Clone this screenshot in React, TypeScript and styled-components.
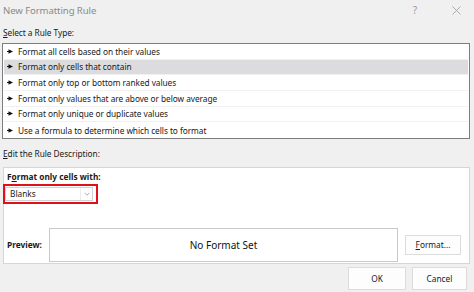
import React from "react";
import styled, { createGlobalStyle } from "styled-components";

const Global = createGlobalStyle`
  html, body { margin: 0; padding: 0; background: #f0f0f0; }
  * { box-sizing: border-box; }
`;

const Window = styled.div`
  width: 474px;
  height: 292px;
  background: #f0f0f0;
  font-family: "Noto Sans", "Open Sans", sans-serif;
  font-size: 8px;
  color: #1a1a1a;
  display: flex;
  flex-direction: column;
  overflow: hidden;
`;

const TitleBar = styled.div`
  height: 20px;
  display: flex;
  align-items: center;
  padding: 0 0 0 3px;
`;

const Title = styled.div`
  flex: 1;
  font-size: 9.6px;
  color: #8a8a8a;
  letter-spacing: -0.1px;
`;

const TitleIcon = styled.div<{ $w: number }>`
  width: ${(p) => p.$w}px;
  display: flex;
  justify-content: center;
  color: #9a9a9a;
  font-size: 10px;
`;

const SectionLabel = styled.div<{ $h: number }>`
  height: ${(p) => p.$h}px;
  display: flex;
  align-items: center;
  padding-left: 3px;
  padding-top: 2px;
  font-size: 8.3px;
  letter-spacing: -0.05px;
`;

const U = styled.span`
  text-decoration: underline;
  text-underline-offset: 1px;
`;

const ListBox = styled.div`
  margin: 0 4px 0 2px;
  border: 1px solid #7d7d7d;
  background: #fff;
  display: flex;
  flex-direction: column;
  padding: 0 1px 0 1px;
`;

const Row = styled.div<{ $sel?: boolean; $last?: boolean }>`
  height: 15.67px;
  display: flex;
  align-items: center;
  gap: 5px;
  padding-left: 3px;
  background: ${(p) => (p.$sel ? "#dcdcdf" : "#fff")};
  border-bottom: ${(p) => (p.$last ? "none" : "1px solid #f1f1f1")};
  font-size: 8.3px;
  letter-spacing: -0.05px;
`;

const Panel = styled.div`
  margin: 0 4px 0 3px;
  height: 97px;
  border: 1px solid #d6d6d6;
  background: #fff;
  display: flex;
  flex-direction: column;
  padding: 3px 0 0 0;
`;

const Bold = styled.div`
  font-weight: 700;
  font-size: 8.3px;
  height: 12px;
  display: flex;
  align-items: center;
  padding-left: 3px;
`;

const RedFrame = styled.div`
  width: 95px;
  height: 20px;
  border: 2.5px solid #e0101a;
  margin: 1px 0 0 -1px;
  display: flex;
  align-items: stretch;
  background: #fff;
`;

const Select = styled.div`
  flex: 1;
  display: flex;
  align-items: center;
  border: 1px solid #d2d2d2;
  margin: 1px 3px 1px 0;
`;

const SelectValue = styled.div`
  flex: 1;
  padding-left: 4px;
  font-size: 8.3px;
`;

const SelectArrow = styled.div`
  width: 12px;
  align-self: stretch;
  display: flex;
  align-items: center;
  justify-content: center;
  border-left: 1px solid #ececec;
`;

const PreviewRow = styled.div`
  margin-top: auto;
  display: flex;
  align-items: center;
  padding-bottom: 1px;
`;

const PreviewLabel = styled.div`
  width: 45px;
  font-weight: 700;
  font-size: 8.3px;
  padding-left: 3px;
`;

const PreviewBox = styled.div`
  width: 349px;
  height: 34px;
  border: 1px solid #c9c9c9;
  display: flex;
  align-items: center;
  justify-content: center;
  font-size: 10px;
  color: #111;
`;

const Button = styled.div<{ $w: number; $h: number }>`
  width: ${(p) => p.$w}px;
  height: ${(p) => p.$h}px;
  border: 1px solid #dcdcdc;
  background: #fdfdfd;
  display: flex;
  align-items: center;
  justify-content: center;
  font-size: 8.3px;
`;

const FormatBtnWrap = styled.div`
  margin-left: 7px;
`;

const Footer = styled.div`
  flex: 1;
  display: flex;
  justify-content: flex-end;
  align-items: center;
  gap: 6px;
  padding: 1px 7px 0 0;
`;

const Pointer = () => (
  <svg width="6" height="5" viewBox="0 0 6 5">
    <path d="M0 2.5H3" stroke="#111" strokeWidth="1" />
    <path d="M1.5 0.2L6 2.5L1.5 4.8Z" fill="#111" />
  </svg>
);

const Chevron = () => (
  <svg width="6" height="4" viewBox="0 0 6 4">
    <path d="M0.5 0.7L3 3.2L5.5 0.7" stroke="#9a9a9a" strokeWidth="0.8" fill="none" />
  </svg>
);

const Close = () => (
  <svg width="9" height="9" viewBox="0 0 9 9">
    <path d="M0.5 0.5L8.5 8.5M8.5 0.5L0.5 8.5" stroke="#9a9a9a" strokeWidth="0.8" />
  </svg>
);

const rules = [
  "Format all cells based on their values",
  "Format only cells that contain",
  "Format only top or bottom ranked values",
  "Format only values that are above or below average",
  "Format only unique or duplicate values",
  "Use a formula to determine which cells to format",
];

export default function App() {
  return (
    <>
      <Global />
      <Window>
        <TitleBar>
          <Title>New Formatting Rule</Title>
          <TitleIcon $w={20}>?</TitleIcon>
          <TitleIcon $w={21} />
          <TitleIcon $w={20}>
            <Close />
          </TitleIcon>
          <TitleIcon $w={8} />
        </TitleBar>
        <SectionLabel $h={23}>
          <span>
            <U>S</U>elect a Rule Type:
          </span>
        </SectionLabel>
        <ListBox>
          {rules.map((r, i) => (
            <Row key={r} $sel={i === 1} $last={i === rules.length - 1}>
              <Pointer />
              <span>{r}</span>
            </Row>
          ))}
        </ListBox>
        <SectionLabel $h={28}>
          <span>
            <U>E</U>dit the Rule Description:
          </span>
        </SectionLabel>
        <Panel>
          <Bold>
            <span>
              F<U>o</U>rmat only cells with:
            </span>
          </Bold>
          <RedFrame>
            <Select>
              <SelectValue>Blanks</SelectValue>
              <SelectArrow>
                <Chevron />
              </SelectArrow>
            </Select>
          </RedFrame>
          <PreviewRow>
            <PreviewLabel>Preview:</PreviewLabel>
            <PreviewBox>No Format Set</PreviewBox>
            <FormatBtnWrap>
              <Button $w={56} $h={20}>
                <span>
                  <U>F</U>ormat...
                </span>
              </Button>
            </FormatBtnWrap>
          </PreviewRow>
        </Panel>
        <Footer>
          <Button $w={58} $h={23}>OK</Button>
          <Button $w={55} $h={23}>Cancel</Button>
        </Footer>
      </Window>
    </>
  );
}
